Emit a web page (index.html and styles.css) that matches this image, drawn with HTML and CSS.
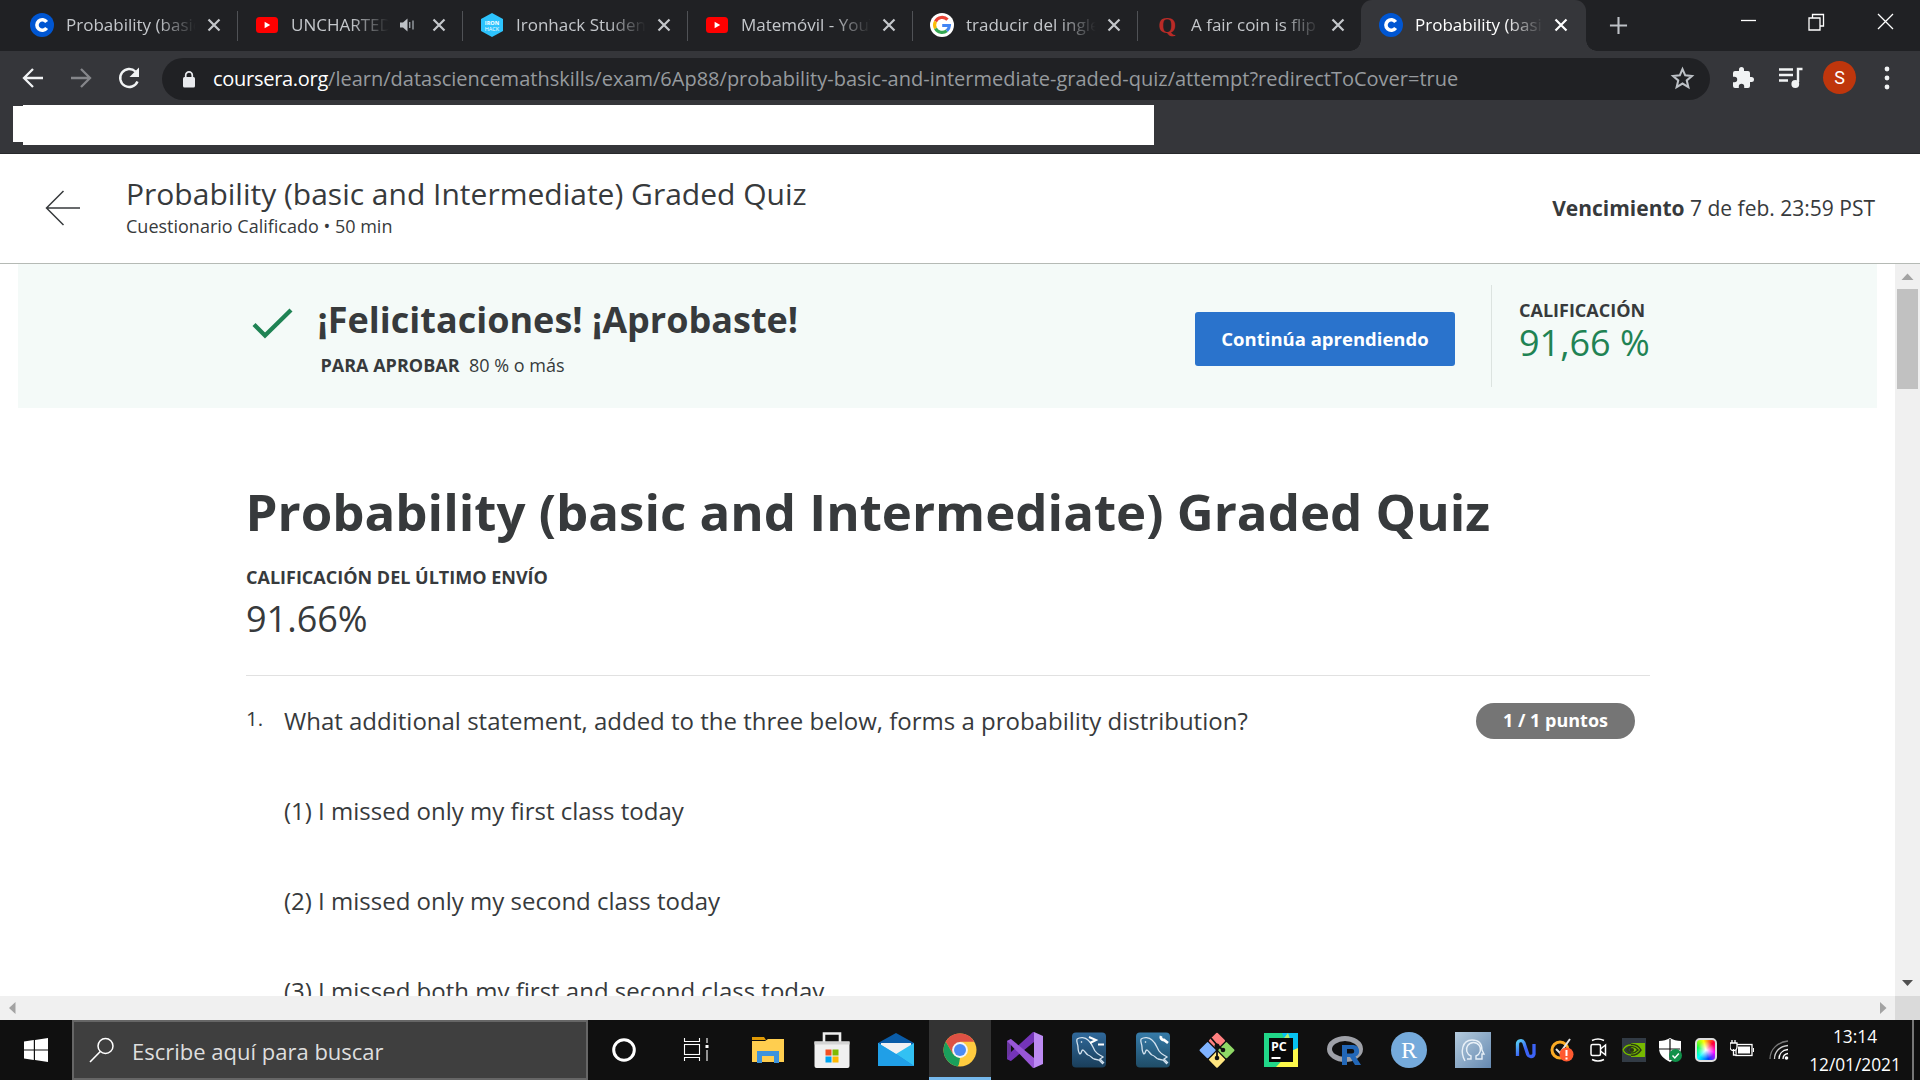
FILE: index.html
```html
<!DOCTYPE html>
<html lang="es">
<head>
<meta charset="utf-8">
<title>Probability (basic and Intermediate) Graded Quiz</title>
<link rel="stylesheet" href="styles.css">
</head>
<body>
<svg class="defs" width="0" height="0">
  <symbol id="coursera" viewBox="0 0 24 24"><circle cx="12" cy="12" r="12" fill="#0056d2"/><path d="M16.600 9A5.300 5.300 0 1 0 16.600 15" fill="none" stroke="#fff" stroke-width="3.600"/></symbol>
  <symbol id="youtube" viewBox="0 0 24 24"><rect x="1" y="4" width="22" height="16" rx="3.500" fill="#f00"/><path d="M9.600 8.800v6.400l5.600-3.200z" fill="#fff"/></symbol>
  <symbol id="close" viewBox="0 0 20 20"><path d="M4.500 4.500l11 11M15.500 4.500l-11 11" stroke="currentColor" stroke-width="2.200" fill="none"/></symbol>
  <symbol id="dolphin" viewBox="0 0 34 35"><path d="M5 6c3-2 8-2 11 1 4 3 5 8 7 11 2 3 5 4 8 6l-3 2 4 4M22 26l5 1 4 4M5 6c-1 3 1 5 1 8 0 3 0 5 2 7 2-1 1-4 3-4 2 1 3 4 5 5 3 1 4 3 6 4" fill="none" stroke="#d3e2ee" stroke-width="1.300"/><circle cx="9.500" cy="9" r=".8" fill="#fff"/></symbol>
</svg>

<header class="browser">
  <div class="tabstrip">
    <div class="tab"><svg class="fav"><use href="#coursera"/></svg><span class="tab-title">Probability (basic</span><svg class="close"><use href="#close"/></svg></div>
    <div class="tab"><svg class="fav"><use href="#youtube"/></svg><span class="tab-title">UNCHARTED</span><svg class="audio" viewBox="0 0 16 16"><path d="M1 5.500h3L8.500 1.500v13L4 10.500H1z" fill="#bdc1c6"/><path d="M10.700 5v6M14 3.500v9" stroke="#9aa0a6" stroke-width="1.400"/></svg><svg class="close"><use href="#close"/></svg></div>
    <div class="tab"><svg class="fav" viewBox="0 0 24 24"><path d="M12 0l11 6v12l-11 6-11-6V6z" fill="#2dc3fd"/><text x="12" y="11.500" class="iron">IRON</text><text x="12" y="17.500" class="iron thin">HACK</text></svg><span class="tab-title">Ironhack Student</span><svg class="close"><use href="#close"/></svg></div>
    <div class="tab"><svg class="fav"><use href="#youtube"/></svg><span class="tab-title">Matemóvil - YouT</span><svg class="close"><use href="#close"/></svg></div>
    <div class="tab"><svg class="fav" viewBox="0 0 24 24"><circle cx="12" cy="12" r="12" fill="#fff"/><g fill="none" stroke-width="3.200"><path d="M17.500 6.700A7.400 7.400 0 0 0 5.500 8.500" stroke="#ea4335"/><path d="M5.500 8.500a7.400 7.400 0 0 0 0 7" stroke="#fbbc05"/><path d="M5.500 15.500a7.400 7.400 0 0 0 11.300 2.200" stroke="#34a853"/><path d="M16.800 17.700a7.400 7.400 0 0 0 2.600-5.200H12.200" stroke="#4285f4"/></g></svg><span class="tab-title">traducir del ingles</span><svg class="close"><use href="#close"/></svg></div>
    <div class="tab last"><svg class="fav" viewBox="0 0 24 24"><text x="12" y="19.500" class="quora">Q</text></svg><span class="tab-title">A fair coin is flip</span><svg class="close"><use href="#close"/></svg></div>
    <div class="tab active"><svg class="fav"><use href="#coursera"/></svg><span class="tab-title">Probability (basic</span><svg class="close"><use href="#close"/></svg></div>
    <svg class="newtab" viewBox="0 0 20 20"><path d="M10 1v18M1 10h18" stroke="#bdc1c6" stroke-width="2.200"/></svg>
    <svg class="winctl" viewBox="0 0 160 24"><g fill="none" stroke="#fff" stroke-width="1.300"><path d="M3 11.500h15"/><path d="M71 9h11v12H71zM74.500 9V5.500h11V17H82"/><path d="M140 5l15 15M155 5l-15 15"/></g></svg>
  </div>
  <div class="toolbar">
    <svg class="nav" viewBox="0 0 24 24"><path d="M22 12H3M12 3l-9 9 9 9" fill="none" stroke="#f1f3f4" stroke-width="2.300"/></svg>
    <svg class="nav" viewBox="0 0 24 24"><path d="M2 12h19M12 3l9 9-9 9" fill="none" stroke="#85868a" stroke-width="2.300"/></svg>
    <svg class="nav" viewBox="0 0 24 24"><path d="M20.500 15.500A9 9 0 1 1 18.500 5.500" fill="none" stroke="#f1f3f4" stroke-width="2.400"/><path d="M22 1.500v9.500h-9.500z" fill="#f1f3f4"/></svg>
    <div class="urlbar">
      <svg class="lock" viewBox="0 0 14 18"><rect x="1" y="6.500" width="12" height="10.500" rx="1.500" fill="#e8eaed"/><path d="M3.700 7V4.700a3.300 3.300 0 0 1 6.600 0V7" fill="none" stroke="#e8eaed" stroke-width="1.700"/></svg>
      <span class="url"><b>coursera.org</b>/learn/datasciencemathskills/exam/6Ap88/probability-basic-and-intermediate-graded-quiz/attempt?redirectToCover=true</span>
      <svg class="star" viewBox="0 0 24 24"><path d="M12 3l2.600 6 6.400.600-4.900 4.200 1.500 6.400-5.600-3.400-5.600 3.400 1.500-6.400L3 9.600 9.400 9z" fill="none" stroke="#bdc1c6" stroke-width="2"/></svg>
    </div>
    <svg class="ext puzzle" viewBox="0 0 24 24"><path d="M20.500 11H19V7a2 2 0 0 0-2-2h-4V3.500a2.500 2.500 0 0 0-5 0V5H4a2 2 0 0 0-2 2v3.800h1.500a2.700 2.700 0 0 1 0 5.400H2V20a2 2 0 0 0 2 2h3.800v-1.500a2.700 2.700 0 0 1 5.400 0V22H17a2 2 0 0 0 2-2v-4h1.500a2.500 2.500 0 0 0 0-5z" fill="#f1f3f4"/></svg>
    <svg class="ext" viewBox="0 0 24 24"><path d="M0 3.500h14M0 9h14M0 14.500h9" stroke="#f1f3f4" stroke-width="2.400"/><path d="M23.500 3H19v13" fill="none" stroke="#f1f3f4" stroke-width="2.400"/><circle cx="16.300" cy="18" r="3.900" fill="#f1f3f4"/></svg>
    <span class="avatar">S</span>
    <svg class="dots" viewBox="0 0 8 24"><g fill="#f1f3f4"><circle cx="4" cy="3" r="2.400"/><circle cx="4" cy="12" r="2.400"/><circle cx="4" cy="21" r="2.400"/></g></svg>
  </div>
  <div class="bookmarks"><i class="notch"></i><i class="strip"></i></div>
</header>

<section class="quizbar">
  <svg class="back" viewBox="0 0 36 36"><path d="M35 18H1.500M18.500 1L1.500 18l17 17" fill="none" stroke="#373a3c" stroke-width="1.500"/></svg>
  <div class="quizname"><h2>Probability (basic and Intermediate) Graded Quiz</h2><p>Cuestionario Calificado • 50 min</p></div>
  <p class="due"><b>Vencimiento</b> 7 de feb. 23:59 PST</p>
</section>

<div class="viewport">
  <main class="page">
    <section class="banner">
      <svg class="check" viewBox="0 0 41 33"><path d="M2 17.500l11 11L39 3" fill="none" stroke="#1f8354" stroke-width="4.300"/></svg>
      <div class="congrats"><h3>¡Felicitaciones! ¡Aprobaste!</h3><p><b>PARA APROBAR</b><span>80 % o más</span></p></div>
      <button class="continue">Continúa aprendiendo</button>
      <div class="grade"><b>CALIFICACIÓN</b><span>91,66 %</span></div>
    </section>
    <article class="quiz">
      <h1>Probability (basic and Intermediate) Graded Quiz</h1>
      <p class="label">CALIFICACIÓN DEL ÚLTIMO ENVÍO</p>
      <p class="score">91.66%</p>
      <div class="question">
        <span class="num">1.</span>
        <div class="prompt">
          <p>What additional statement, added to the three below, forms a probability distribution?</p>
          <p>(1) I missed only my first class today</p>
          <p>(2) I missed only my second class today</p>
          <p>(3) I missed both my first and second class today</p>
        </div>
        <span class="points">1 / 1 puntos</span>
      </div>
    </article>
  </main>
  <div class="vscroll"><svg viewBox="0 0 25 24"><path d="M6.500 15.500h12L12.500 9z" fill="#a3a3a3"/></svg><i class="thumb"></i><svg class="down" viewBox="0 0 25 24"><path d="M7 8.500h11L12.500 14.500z" fill="#505050"/></svg></div>
  <div class="hscroll"><svg viewBox="0 0 24 24"><path d="M15.500 6v12L9 12z" fill="#a3a3a3"/></svg><svg viewBox="0 0 24 24"><path d="M9 6v12l6.500-6z" fill="#a3a3a3"/></svg></div>
  <div class="corner"></div>
</div>

<footer class="taskbar">
  <svg class="start" viewBox="0 0 24 24"><path d="M0 3.400l9.800-1.300v9.300H0zM11 1.900L24 0v11.400H11zM0 12.600h9.800v9.300L0 20.600zM11 12.600h13V24l-13-1.900z" fill="#fff"/></svg>
  <div class="search"><svg viewBox="0 0 26 26"><circle cx="16.500" cy="9" r="7.500" fill="none" stroke="#fff" stroke-width="1.500"/><path d="M11.300 14.500L1 25" stroke="#fff" stroke-width="1.600"/></svg><span>Escribe aquí para buscar</span></div>
  <div class="apps">
    <div class="app"><svg viewBox="0 0 36 36"><circle cx="18" cy="18" r="10.300" fill="none" stroke="#fff" stroke-width="3"/></svg></div>
    <div class="app task"><svg viewBox="0 0 36 36"><g fill="none" stroke="#fff" stroke-width="1.100"><rect x="6.500" y="12.500" width="15" height="10"/><path d="M6.500 6v3.500h15V6M6.500 29v-3.500h15V29M29 6v5M29 18v11"/></g><rect x="27.500" y="13" width="3" height="3" fill="#fff"/></svg></div>
    <div class="app"><svg viewBox="0 0 36 36"><path d="M2 5h12l2 3H2z" fill="#e09a05"/><path d="M2 9h13l3-2h16v23H2z" fill="#ffce4f"/><path d="M7 19h22v12h-5v-7H12v7H7z" fill="#3d93dc"/></svg></div>
    <div class="app"><svg viewBox="0 0 36 36"><path d="M10 12V1.500h16V12" fill="none" stroke="#eee" stroke-width="2.600"/><path d="M.500 9.500h35V34a2 2 0 0 1-2 2h-31a2 2 0 0 1-2-2z" fill="#f0f0f0"/><path d="M.500 9.500h35v3H.500z" fill="#d4d4d4"/><path d="M11.500 17.500h6v6h-6z" fill="#f25022"/><path d="M18.500 17.500h6v6h-6z" fill="#7fba00"/><path d="M11.500 24.500h6v6h-6z" fill="#00a4ef"/><path d="M18.500 24.500h6v6h-6z" fill="#ffb900"/></svg></div>
    <div class="app"><svg viewBox="0 0 36 36"><path d="M0 11L18 1l18 10v10H0z" fill="#0a5ca8"/><path d="M3 11h30v12H3z" fill="#f1f1f3"/><path d="M0 11l18 11L36 11v23H0z" fill="#32c1f3"/><path d="M0 34l18-12 18 12z" fill="#1487dd"/><path d="M0 11l18 11 18 12H0z" fill="#209fe7"/></svg></div>
    <div class="app current"><svg viewBox="0 0 36 36"><circle cx="18" cy="18" r="16.500" fill="#ffcb3f"/><path d="M3.700 9.800A16.500 16.500 0 0 1 32.300 9.800H18L11 22z" fill="#dd5144"/><path d="M3.700 9.800L11 22l7 4h2.200l-4.300 8.400A16.500 16.500 0 0 1 3.700 9.800z" fill="#1a9f5c"/><path d="M18 26l7-4-8.500 12.400z" fill="#ffcb3f"/><circle cx="18" cy="18" r="7.900" fill="#f4f4f4"/><circle cx="18" cy="18" r="6" fill="#4c8bf5"/></svg></div>
    <div class="app"><svg viewBox="0 0 36 36"><path d="M0 9l4-2v22l-4-2z" fill="#68359d"/><path d="M0 27l4 2L27 10V0h-1L4 20z" fill="#7434b8"/><path d="M0 9l4-2 23 19v10h-1z" fill="#9857d6"/><path d="M27 0l9 4v28l-9 4z" fill="#bd8bf3"/></svg></div>
    <div class="app"><svg viewBox="0 0 36 36"><defs><linearGradient id="sea" x2="0" y2="1"><stop stop-color="#30699b"/><stop offset="1" stop-color="#1a3e5a"/></linearGradient></defs><rect x="1" y=".500" width="34" height="35" rx="4" fill="url(#sea)"/><use href="#dolphin" x="1" y="1" width="34" height="35"/><path d="M18 5l7 3-6 3M27 12.500h6" fill="none" stroke="#fff" stroke-width="2"/></svg></div>
    <div class="app"><svg viewBox="0 0 36 36"><defs><linearGradient id="sea2" x2="0" y2="1"><stop stop-color="#367ba9"/><stop offset="1" stop-color="#1f4c66"/></linearGradient></defs><rect x="1" y=".500" width="34" height="35" rx="4" fill="url(#sea2)"/><use href="#dolphin" x="1" y="1" width="34" height="35"/><path d="M26 4a3 3 0 0 0 3 4l4 3" fill="none" stroke="#fff" stroke-width="2.800"/></svg></div>
    <div class="app"><svg viewBox="0 0 36 36"><g transform="rotate(45 18 18)"><rect x="5.500" y="5.500" width="12" height="12" rx="1" fill="#ff8080"/><rect x="18.800" y="5.500" width="12" height="12" rx="1" fill="#8fd866"/><rect x="5.500" y="18.800" width="12" height="12" rx="1" fill="#80b3ff"/><rect x="18.800" y="18.800" width="12" height="12" rx="1" fill="#ffe680"/></g><path d="M12 6l6 7v13M18 13l6 5" fill="none" stroke="#101010" stroke-width="1.800"/><g fill="#101010"><circle cx="18" cy="14" r="2.500"/><circle cx="24" cy="18" r="2.300"/><circle cx="18" cy="26" r="2.300"/></g></svg></div>
    <div class="app"><svg viewBox="0 0 36 36"><path d="M1 1h34v34H1z" fill="#21d789"/><path d="M19 1h16v16L26 20z" fill="#07c3f2"/><path d="M35 16v19H13L28 19z" fill="#fcf84a"/><path d="M18 10l7-9 4 12z" fill="#b8ed68"/><path d="M6 6h24v24H6z" fill="#080808"/><text x="8" y="19" class="pc">PC</text><path d="M8.500 25h9v2h-9z" fill="#fff"/></svg></div>
    <div class="app"><svg viewBox="0 0 36 36"><ellipse cx="18" cy="17" rx="15.500" ry="10.500" fill="none" stroke="#9fa1a8" stroke-width="5"/><path d="M15 33V13h11.500a6 6 0 0 1 2 11.500L34 33h-6l-5-8h-3v8zm5-16v4.500h5a2.200 2.200 0 0 0 0-4.500z" fill="#2267b7"/></svg></div>
    <div class="app"><svg viewBox="0 0 36 36"><circle cx="18" cy="18" r="18" fill="#75aadb"/><text x="18" y="25.500" class="rs">R</text></svg></div>
    <div class="app"><svg viewBox="0 0 36 36"><defs><linearGradient id="steel" x2="1" y2="1"><stop stop-color="#b4cbdd"/><stop offset="1" stop-color="#6589b1"/></linearGradient></defs><path d="M0 0h36v36H0z" fill="url(#steel)"/><path d="M10 29c-5-9-3-21 7-21 9 0 10 6 10 10l2 4h-2v5h-4M12 27h4v-3a7 7 0 1 1 5 0v3h4" fill="none" stroke="#e8f0f7" stroke-width="1.400"/></svg></div>
  </div>
  <div class="tray">
    <svg viewBox="0 0 24 24"><defs><linearGradient id="nn" x2="1" y2="1"><stop stop-color="#58d0f5"/><stop offset=".5" stop-color="#3c63f5"/></linearGradient></defs><path d="M3.500 18V6a3.300 3.300 0 0 1 6.300-1.400l4 12A3.300 3.300 0 0 0 20 16V6" fill="none" stroke="url(#nn)" stroke-width="3.300"/></svg>
    <svg viewBox="0 0 24 24"><circle cx="10" cy="12" r="8" fill="none" stroke="#f9aa24" stroke-width="3"/><path d="M6 11l4 4L20 1" fill="none" stroke="#e5e5e5" stroke-width="2"/><circle cx="16.500" cy="16.500" r="7" fill="#ff5a30"/><path d="M16.500 12v6M16.500 19.500v2" stroke="#fff" stroke-width="2"/></svg>
    <svg viewBox="0 0 24 24"><g fill="none" stroke="#fff" stroke-width="1.500"><rect x="5" y="6.500" width="9.500" height="11" rx="1.500"/><path d="M14.500 11l5-4v10l-5-4M6 2.500c4-2 8-2 12 0M6 21.500c4 2 8 2 12 0"/></g></svg>
    <svg viewBox="0 0 24 24"><path d="M0 0h24v24H0z" fill="#323b45"/><path d="M9 5h14v14H9z" fill="#76b900"/><path d="M1 12c5-8 14-7 18 0-5 7-13 7-18 0zM5 12c3-5 8-4 11 0-4 4-8 4-11 0z" fill="none" stroke="#2b3b12" stroke-width="1.500"/><path d="M1 12c2-4 5-5 8-5M1 12c2 4 5 5 8 5" fill="none" stroke="#76b900" stroke-width="1.500"/><circle cx="10" cy="12" r="2" fill="#29350f"/></svg>
    <svg viewBox="0 0 24 24"><path d="M12 0c3 2 7 3 11 3v7c0 7-5 11-11 14C6 21 1 17 1 10V3c4 0 8-1 11-3z" fill="#fff"/><path d="M12 1v21M1 11h21" stroke="#101010" stroke-width="1.200"/><circle cx="17.500" cy="17.500" r="6.500" fill="#10914a"/><path d="M14.500 17.500l2.300 2.500 4-4.500" fill="none" stroke="#fff" stroke-width="1.500"/></svg>
    <i class="color"></i>
    <svg viewBox="0 0 24 24"><rect x="6" y="6.500" width="16" height="11" fill="none" stroke="#fff" stroke-width="1.300"/><path d="M8 8.500h12v7H8z" fill="#fff"/><path d="M23.500 10v4" stroke="#fff"/><path d="M0 5h7v4a3 3 0 0 1-7 0zM2 2v3M5 2v3M3.500 11v6H6" fill="#101010" stroke="#fff" stroke-width="1.300"/></svg>
    <svg class="wifi" viewBox="0 0 24 24"><g fill="none" stroke="#fff" stroke-width="1.300"><path d="M2 21C2 11 10 4 20 3" stroke="#777"/><path d="M6.500 21c0-7 5-13 13.500-13.500" stroke="#ccc"/><path d="M11 21c0-5 3-9 9-9.500M15 21c0-3 1-5 5-5.500"/></g><circle cx="18.500" cy="20" r="1.800" fill="#fff"/></svg>
  </div>
  <div class="clock"><span>13:14</span><span>12/01/2021</span></div>
  <i class="peek"></i>
</footer>
</body>
</html>
```
FILE: styles.css
```css
* { box-sizing: border-box; }
html, body { margin: 0; width: 1920px; height: 1080px; overflow: hidden; }
body { display: flex; flex-direction: column; background: #fff; color: #373a3c; font-family: "Open Sans", "Noto Sans", sans-serif; }
h1, h2, h3, p { margin: 0; white-space: nowrap; }
svg { display: block; flex: none; }
.defs { position: absolute; }

/* browser chrome */
.browser { height: 154px; flex: none; background: #35363a; border-bottom: 1px solid #27282b; }
.tabstrip { display: flex; align-items: center; height: 51px; padding-left: 13px; background: #202124; color: #c4c7cb; }
.tab { display: flex; align-items: center; width: 225px; height: 30px; padding: 0 13px 1px 17px; border-right: 1.5px solid #505256; font-size: 17px; flex: none; }
.tab.last { border-right-color: transparent; padding-right: 14px; }
.tab.active { height: 51px; margin-left: -2px; padding: 0 15px 1px 18px; border: 0; border-radius: 11px 11px 0 0; background: #35363a; color: #fff; position: relative; }
.tab.active::before, .tab.active::after { content: ""; position: absolute; bottom: 0; width: 11px; height: 11px; }
.tab.active::before { left: -11px; background: radial-gradient(circle at 0 0, transparent 10.5px, #35363a 11px); }
.tab.active::after { right: -11px; background: radial-gradient(circle at 100% 0, transparent 10.5px, #35363a 11px); }
.fav { width: 24px; height: 24px; margin-right: 12px; }
.tab-title { flex: 1; min-width: 0; overflow: hidden; white-space: nowrap; line-height: 28px; -webkit-mask-image: linear-gradient(90deg, #000 calc(100% - 38px), transparent); mask-image: linear-gradient(90deg, #000 calc(100% - 38px), transparent); }
.close { width: 20px; height: 20px; margin-left: 8px; }
.audio { width: 16px; height: 16px; margin-left: 10px; margin-right: 14px; }
.audio + .close { margin-left: 0; }
.iron { font: 700 5.5px "Open Sans", sans-serif; fill: #fff; text-anchor: middle; }
.thin { font-weight: 400; }
.quora { font: 700 23px "Liberation Serif", serif; fill: #b92b27; text-anchor: middle; }
.newtab { width: 19px; height: 19px; margin-left: 23px; margin-bottom: 1px; }
.winctl { width: 160px; height: 24px; margin-left: auto; margin-right: 22px; margin-bottom: 10px; }
.toolbar { display: flex; align-items: center; height: 54px; padding: 0 29px 0 21px; }
.nav { width: 24px; height: 24px; margin-right: 24px; }
.urlbar { display: flex; align-items: center; width: 1548px; height: 42px; margin-top: 2px; margin-left: -3px; padding: 0 15px 0 20px; border-radius: 21px; background: #202124; flex: none; }
.lock { width: 14px; height: 19px; margin-right: 17px; }
.url { flex: 1; font-size: 20px; line-height: 28px; white-space: nowrap; color: #969a9e; }
.url b { font-weight: 400; letter-spacing: -.28px; color: #fff; }
.star { width: 25px; height: 25px; margin-bottom: 1px; }
.ext { width: 24px; height: 24px; margin-left: 24px; }
.ext.puzzle { margin-left: 21px; }
.avatar { width: 33px; height: 33px; margin-left: 20px; margin-bottom: 1px; border-radius: 50%; background: #bf360c; color: #fff; font: 18px/33px Roboto, sans-serif; text-align: center; }
.dots { width: 8px; height: 24px; margin-left: auto; }
.bookmarks { display: flex; height: 48px; padding-left: 13px; }
.notch { width: 10px; height: 36px; margin-top: 1px; background: #fff; }
.strip { width: 1131px; height: 40px; background: #fff; }

/* quiz header */
.quizbar { display: flex; align-items: center; height: 110px; flex: none; padding: 0 45px; border-bottom: 1px solid #b5bab5; }
.back { width: 36px; height: 36px; margin-bottom: 2px; }
.quizname { margin-left: 45px; padding-bottom: 5px; }
.quizname h2 { font-size: 30px; font-weight: 400; line-height: 40px; }
.quizname p { font-size: 18px; line-height: 25px; }
.due { margin-left: auto; margin-bottom: 2px; font-size: 21px; }

/* scrolling page */
.viewport { display: grid; grid-template: 732px 24px / 1895px 25px; height: 756px; flex: none; }
.page { overflow: hidden; padding: 0 18px; }
.banner { display: flex; align-items: center; height: 143.500px; padding-left: 234px; background: #f4faf8; }
.check { width: 41px; height: 33px; margin-bottom: 25px; }
.congrats { width: 877.500px; margin-left: 24.500px; }
.congrats h3 { font-size: 36px; line-height: 49px; margin-bottom: 9px; margin-top: 2px; }
.congrats p { display: flex; gap: 9.500px; padding-left: 3px; font-size: 18px; line-height: 25px; }
.continue { width: 260px; height: 54px; margin: 7px 0 0; padding: 0 0 2px; border: 0; border-radius: 3px; background: #2a73cc; color: #fff; font: 700 18.500px "Open Sans", sans-serif; }
.grade { display: flex; flex-direction: column; height: 102px; margin-left: 36px; padding: 13px 0 0 27px; border-left: 1px solid #dce3e0; white-space: nowrap; }
.grade b { font-size: 18px; line-height: 24px; }
.grade span { margin-top: 1px; font-size: 36px; line-height: 40px; color: #1f8354; }
.quiz { width: 1404px; margin-left: 228px; padding-top: 68.500px; }
.quiz h1 { margin-left: -.5px; font-size: 51px; line-height: 70px; }
.label { margin-top: 18px; font-size: 18px; font-weight: 700; line-height: 26px; }
.score { margin-top: 5px; font-size: 36px; line-height: 48px; }
.question { display: flex; margin-top: 32px; padding: 27px 15px 0 0; border-top: 1px solid #e1e1e1; }
.num { width: 38px; font-size: 20.500px; line-height: 31px; }
.prompt { display: flex; flex-direction: column; gap: 54px; }
.prompt p { font-size: 24px; line-height: 36px; }
.points { width: 159px; height: 36px; margin-left: auto; border-radius: 18px; background: #757575; color: #fff; font-size: 18px; font-weight: 700; line-height: 35px; text-align: center; }
.vscroll { display: flex; flex-direction: column; align-items: center; background: #f0f0f0; }
.vscroll svg { width: 25px; height: 25px; }
.thumb { width: 21px; height: 100px; background: #c1c1c1; }
.vscroll .down { margin-top: auto; }
.hscroll { display: flex; justify-content: space-between; background: #f0f0f0; }
.hscroll svg { width: 24px; height: 24px; }
.corner { background: #dadada; }

/* taskbar */
.taskbar { display: flex; align-items: center; height: 60px; flex: none; background: #101010; color: #fff; }
.start { width: 24px; height: 24px; margin: 0 24px; }
.search { display: flex; align-items: center; width: 516px; height: 60px; padding-left: 15px; border: 2px solid #666; background: #3f3f3f; color: #dedede; flex: none; }
.search svg { width: 26px; height: 26px; margin-right: 17px; }
.search span { font-size: 22px; padding-top: 1px; }
.apps { display: flex; align-items: stretch; height: 60px; padding-left: 4px; flex: none; }
.app { display: flex; align-items: center; justify-content: center; width: 64.100px; flex: none; }
.app.task { width: 80px; }
.app svg { width: 36px; height: 36px; }
.app.current { width: 62.100px; margin: 0 1px; background: linear-gradient(#76b9ed, #76b9ed) 0 100% / 100% 3px no-repeat #333; }
.pc { font: 700 12.500px "Open Sans", sans-serif; fill: #fff; }
.rs { font: 24px "Liberation Serif", serif; fill: #fff; text-anchor: middle; }
.tray { display: flex; align-items: center; gap: 12px; margin-left: 9px; flex: none; }
.tray svg { width: 24px; height: 24px; }
.tray .wifi { margin-left: 2px; }
.color { width: 22px; height: 24px; margin: 0 1px; border: 2px solid #ddd; border-radius: 5px; background: radial-gradient(circle, #fff, transparent 65%), conic-gradient(from 45deg, #f03, #f0f, #04f, #0ff, #0f4, #ff0, #f03); }
.clock { display: flex; flex-direction: column; align-items: center; width: 94px; margin-left: auto; margin-right: 10px; padding-top: 2px; font-size: 17.300px; line-height: 28px; flex: none; }
.peek { width: 8px; height: 60px; border-left: 2px solid #777; flex: none; }
```
